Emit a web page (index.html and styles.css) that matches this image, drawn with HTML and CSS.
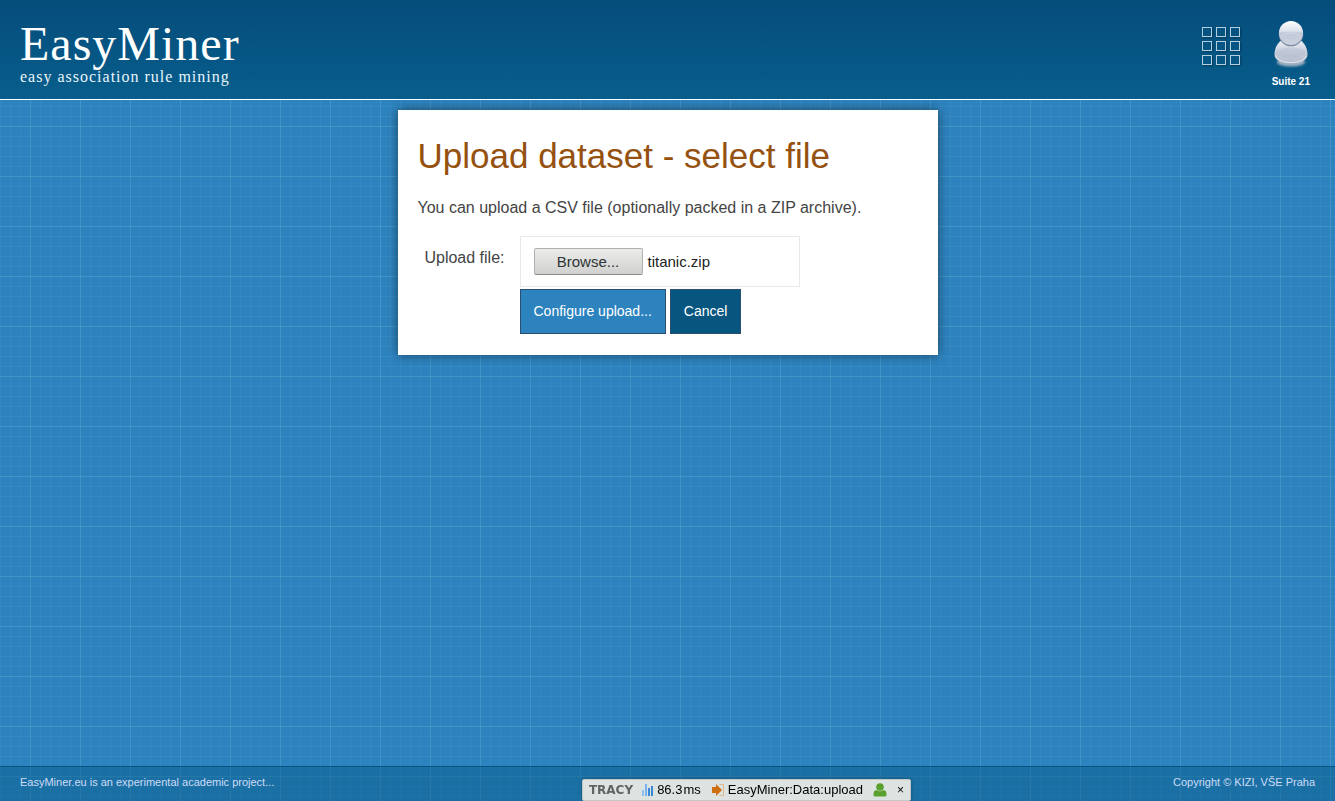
FILE: index.html
```html
<!DOCTYPE html>
<html lang="en">
<head>
<meta charset="utf-8">
<title>Upload dataset - EasyMiner</title>
<link rel="stylesheet" href="styles.css">
</head>
<body>
<header class="site-header">
  <a class="brand" href="#">
    <span class="brand-name">EasyMiner</span>
    <span class="brand-claim">easy association rule mining</span>
  </a>
  <nav class="header-nav">
    <a class="apps" href="#" aria-label="Applications">
      <i></i><i></i><i></i><i></i><i></i><i></i><i></i><i></i><i></i>
    </a>
    <a class="user" href="#">
      <svg class="avatar" viewBox="0 0 36 48" aria-hidden="true">
        <defs>
          <linearGradient id="body" x1="0" y1="0" x2="0" y2="1">
            <stop offset="0" stop-color="#f0f2f7"/><stop offset=".45" stop-color="#cbd1de"/><stop offset="1" stop-color="#b4bccd"/>
          </linearGradient>
          <linearGradient id="head" x1="0" y1="0" x2="0" y2="1">
            <stop offset="0" stop-color="#ffffff"/><stop offset=".42" stop-color="#dde2ec"/><stop offset=".5" stop-color="#c0c8d8"/><stop offset="1" stop-color="#ccd2df"/>
          </linearGradient>
          <filter id="soft"><feGaussianBlur stdDeviation="1"/></filter>
        </defs>
        <ellipse cx="18" cy="42" rx="14" ry="4.500" fill="#9fb0c2" filter="url(#soft)"/>
        <path d="M9 20C4 23 1.500 29 1.500 34.500c0 6 7.500 9 16.500 9s16.500-3 16.500-9C34.500 29 32 23 27 20z" fill="url(#body)"/>
        <path d="M2.500 36c2 4.500 8 6.500 15.500 6.500S31.500 40.500 33.500 36" fill="none" stroke="#e4e8ef"/>
        <path d="M3 32c4-6 26-6 30 0-1 4-7 6-15 6S4 36 3 32z" fill="#aeb7c9" opacity=".35"/>
        <circle cx="18" cy="14" r="12.300" fill="#7c8aa4"/>
        <circle cx="18" cy="13" r="12" fill="url(#head)"/>
        <path d="M7.500 16.500q10.500-7 21 0" fill="none" stroke="#dfe3ec" opacity=".6"/>
      </svg>
      <span class="user-name">Suite 21</span>
    </a>
  </nav>
</header>

<main class="content">
  <section class="panel">
    <h1>Upload dataset - select file</h1>
    <p>You can upload a CSV file (optionally packed in a ZIP archive).</p>
    <form class="upload-form">
      <label class="field-label" for="file">Upload file:</label>
      <div class="field">
        <div class="file-box">
          <input class="file-input" type="file" id="file">
          <label class="browse" for="file">Browse...</label>
          <span class="file-name">titanic.zip</span>
        </div>
        <div class="actions">
          <button class="btn btn-primary" type="submit">Configure upload...</button>
          <button class="btn btn-cancel" type="button">Cancel</button>
        </div>
      </div>
    </form>
  </section>
</main>

<footer class="site-footer">
  <span>EasyMiner.eu is an experimental academic project...</span>
  <span>Copyright © KIZI, VŠE Praha</span>
</footer>

<div class="tracy">
  <span class="tracy-logo">TRACY</span>
  <a class="tracy-item" href="#">
    <svg class="ico ico-chart" viewBox="0 0 12 14" aria-hidden="true"><path d="M0 7h2v6H0zM6 8h2v5H6z" fill="#8fc0f2"/><path d="M3 1h2v12H3z" fill="#79b2ee"/><path d="M6 5h2v8H6zM9 3h2v10H9z" fill="#3987d4"/></svg>
    <span>86.3&#8202;ms</span>
  </a>
  <a class="tracy-item" href="#">
    <svg class="ico" viewBox="0 0 14 14" aria-hidden="true"><path d="M8.500 1.500h4v11h-4" fill="none" stroke="#dfb88e"/><path d="M1 4h4V1l6 6-6 6v-3H1z" fill="#cf6f10"/></svg>
    <span>EasyMiner:Data:upload</span>
  </a>
  <a class="tracy-item" href="#" aria-label="User">
    <svg class="ico" viewBox="0 0 14 14" aria-hidden="true"><circle cx="7" cy="4" r="3.800" fill="#5aa02c"/><path d="M3.500 7q3.500 2.500 7 0Q13.500 7.500 13.500 11v1q0 1.500-1.500 1.500H2Q.5 13.500.5 12v-1Q.5 7.500 3.500 7z" fill="#5aa02c"/></svg>
  </a>
  <button class="tracy-close" type="button" aria-label="Close">×</button>
</div>
</body>
</html>
```
FILE: styles.css
```css
* { box-sizing: border-box; }

body {
  margin: 0;
  min-height: 100vh;
  display: flex;
  flex-direction: column;
  font-family: "Liberation Sans", Arial, sans-serif;
  font-size: 16px;
  line-height: 20px;
  color: #444;
  background-color: #2d83be;
  background-image:
    linear-gradient(rgba(90, 170, 205, .32) 1px, transparent 1px),
    linear-gradient(90deg, rgba(90, 170, 205, .32) 1px, transparent 1px),
    linear-gradient(rgba(90, 165, 205, .18) 1px, transparent 1px),
    linear-gradient(90deg, rgba(90, 165, 205, .18) 1px, transparent 1px);
  background-size: 50px 50px, 50px 50px, 10px 10px, 10px 10px;
  background-position: 0 26px, 30px 0, 0 6px, 0 0;
}

a { color: inherit; text-decoration: none; }

.site-header {
  display: flex;
  justify-content: space-between;
  height: 100px;
  padding: 20px 25px 0 20px;
  color: #fff;
  background: linear-gradient(#054c7b, #075e8c);
  border-bottom: 1px solid #fff;
}

.brand { font-family: "Liberation Serif", "Times New Roman", serif; }
.brand-name { display: block; font-size: 48px; line-height: 48px; letter-spacing: 1px; }
.brand-claim { display: block; font-size: 16px; line-height: 17px; letter-spacing: 1px; color: #e8f4fa; }

.header-nav { display: flex; gap: 32px; }
.apps {
  display: grid;
  grid-template-columns: repeat(3, 10px);
  grid-auto-rows: 10px;
  gap: 4px;
  padding-top: 7px;
}
.apps i { border: 1px solid #b4d0de; box-shadow: 1px 1px 2px rgba(0, 0, 0, .3); }
.user { display: flex; flex-direction: column; align-items: center; }
.avatar { width: 36px; height: 48px; }
.user-name { margin-top: 4px; font-size: 10px; font-weight: bold; }

.content { flex: 1; padding: 10px 20px; }
.panel {
  max-width: 540px;
  margin: 0 auto;
  padding: 20px 20px 21px;
  background: #fff;
  box-shadow: 0 0 10px rgba(0, 0, 0, .5);
}
.panel h1 {
  margin: 0 0 16px;
  font-size: 35px;
  line-height: 52px;
  font-weight: normal;
  color: #955110;
}
.panel p { margin: 0 0 18px; }

.upload-form { display: flex; gap: 15px; }
.field-label { width: 87px; padding-top: 12px; text-align: right; }
.file-box {
  display: flex;
  align-items: center;
  gap: 5px;
  width: 280px;
  height: 51px;
  padding: 0 13px;
  border: 1px solid #e9e9e9;
  font-size: 15px;
  color: #222;
}
.file-input { position: absolute; opacity: 0; width: 1px; height: 1px; }
.browse {
  width: 109px;
  height: 27px;
  line-height: 26px;
  border: 1px solid #b0b0ac;
  border-bottom-color: #8e8e88;
  border-radius: 2px;
  background: linear-gradient(#ececea, #d0d0ce);
  color: #2e3436;
  text-align: center;
}
.actions { display: flex; gap: 4px; margin-top: 2px; }
.btn {
  height: 45px;
  padding: 0 13px 2px;
  border: 1px solid #2a4f70;
  font: 14px "Liberation Sans", Arial, sans-serif;
  color: #fff;
}
.btn-primary { background: #2d83be; }
.btn-cancel { background: #075680; }

.site-footer {
  display: flex;
  justify-content: space-between;
  height: 35px;
  padding: 5px 20px;
  border-top: 1px solid #075680;
  background: rgba(7, 94, 140, .5);
  font-size: 11px;
  color: #cfdcf5;
}

.tracy {
  position: fixed;
  right: 424px;
  bottom: 0;
  display: flex;
  align-items: center;
  height: 22px;
  padding: 0 6px;
  border: 1px solid #c3c8c7;
  border-radius: 2px;
  background: #dde3e1;
  color: #000;
  font-size: 13px;
  box-shadow: 0 0 4px rgba(0, 0, 0, .3);
}
.tracy-logo {
  margin-right: 9px;
  font-family: "DejaVu Sans", sans-serif;
  font-size: 12px;
  font-weight: bold;
  color: #606465;
}
.tracy-item { display: flex; align-items: center; gap: 3px; margin-right: 10px; }
.ico { width: 14px; height: 14px; }
.ico-chart { width: 12px; }
.tracy-close { padding: 0; border: 0; background: none; font: 12px "Liberation Sans", Arial, sans-serif; }
```
